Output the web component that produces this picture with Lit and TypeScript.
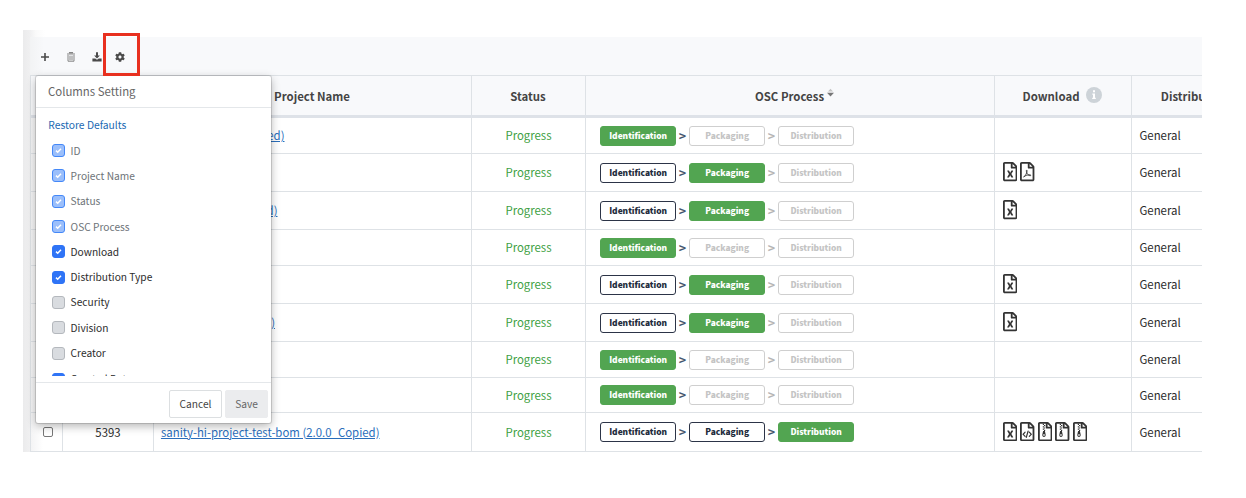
import { LitElement, html, svg, css } from "lit";
import { customElement } from "lit/decorators.js";
import { classMap } from "lit/directives/class-map.js";

type Doc = "excel" | "pdf" | "code" | "zip";

interface Row {
  height: number;
  stage: number;
  docs: Doc[];
  id?: string;
  name?: string;
  nameWidth?: number;
}

const COPIED = "sanity-test (Copied)";

const ROWS: Row[] = [
  { height: 36, stage: 0, docs: [], name: COPIED, nameWidth: 123 },
  { height: 38, stage: 1, docs: ["excel", "pdf"] },
  { height: 38, stage: 1, docs: ["excel"], name: COPIED, nameWidth: 116 },
  { height: 36, stage: 0, docs: [] },
  { height: 38, stage: 1, docs: ["excel"] },
  { height: 38, stage: 1, docs: ["excel"], name: COPIED, nameWidth: 113.5 },
  { height: 36, stage: 0, docs: [] },
  { height: 35, stage: 0, docs: [] },
  {
    height: 39,
    stage: 2,
    docs: ["excel", "code", "zip", "zip", "zip"],
    id: "5393",
    name: "sanity-hi-project-test-bom (2.0.0_Copied)",
    nameWidth: 218,
  },
];

const STAGES = ["Identification", "Packaging", "Distribution"];

const COLUMNS: [string, "locked" | "on" | "off"][] = [
  ["ID", "locked"],
  ["Project Name", "locked"],
  ["Status", "locked"],
  ["OSC Process", "locked"],
  ["Download", "on"],
  ["Distribution Type", "on"],
  ["Security", "off"],
  ["Division", "off"],
  ["Creator", "off"],
  ["Created Date", "on"],
];

const SHEET =
  "M369.9 97.9L286 14C277 5 264.8-.1 252.1-.1H48C21.5 0 0 21.5 0 48v416c0 26.5 21.5 48 48 48h288c26.5 0 48-21.5 48-48V131.9c0-12.7-5.1-25-14.1-34zM332.1 128H256V51.9l76.1 76.1zM48 464V48h160v104c0 13.3 10.7 24 24 24h104v288H48z";

const MARKS = {
  excel: svg`<path d="M260 224h-28.8c-4.4 0-8.4 2.4-10.5 6.3-18 33.1-22.2 42.4-28.6 57.7-13.9-29.1-6.9-17.3-28.6-57.7-2.1-3.9-6.2-6.3-10.6-6.3H124c-9.3 0-15 10-10.4 18l46.3 78-46.3 78c-4.7 8 1.1 18 10.4 18h28.9c4.4 0 8.4-2.4 10.5-6.3 21.7-40 23-45 28.6-57.7 14.9 30.2 5.9 15.9 28.6 57.7 2.1 3.9 6.2 6.3 10.6 6.3H260c9.3 0 15-10 10.4-18L224 320c.7-1.1 30.3-50.5 46.3-78 4.7-8-1.1-18-10.3-18z"/>`,
  pdf: svg`<path d="M96 402c34-14 62-62 82-116 10-28 14-62 4-70-12-6-16 22-6 56 14 44 46 84 84 92 20 4 36-4 28-14-18-14-70-8-116 8-36 12-72 26-76 44z" fill="none" stroke="currentColor" stroke-width="24"/>`,
  code: svg`<path d="M136 272l-52 56 52 56M248 272l52 56-52 56M216 244l-48 168" fill="none" stroke="currentColor" stroke-width="32" stroke-linecap="round"/>`,
  zip: svg`<path d="M128 48h32v32h-32zM160 80h32v32h-32zM128 112h32v32h-32zM160 144h32v32h-32zM128 176h32v32h-32zM160 208h32v32h-32z"/><path fill-rule="evenodd" d="M136 240h48l20 92c8 36-14 68-44 68s-52-32-44-68zM160 330c-18 0-28 10-28 20s10 20 28 20 28-10 28-20-10-20-28-20z"/>`,
};

@customElement("app-root")
export class AppRoot extends LitElement {
  static styles = css`
    :host {
      display: block;
      position: relative;
      width: 1246px;
      height: 498px;
      overflow: hidden;
      background: #fff;
      color: #2b2b2b;
      font: 11.4px/16px "Noto Sans CJK JP", "Source Sans Pro", sans-serif;
    }
    .frame {
      box-sizing: border-box;
      width: 1202px;
      padding: 30px 0 0 23px;
      overflow: hidden;
    }
    .page {
      padding-left: 7px;
      padding-top: 7px;
      background: linear-gradient(90deg, #ebebec, #f0f0f1 7px, #fafafa 13px, #fff 22px);
    }
    .toolbar {
      display: flex;
      align-items: center;
      gap: 16px;
      height: 38px;
      padding: 1px 0 0 10px;
      box-sizing: border-box;
      background: linear-gradient(90deg, #f2f3f4, #f8f9fb 14px);
      color: #4a4a4a;
    }
    .toolbar svg { width: 10px; height: 10px; display: block; fill: currentColor; }
    .toolbar .trash { color: #858585; }
    .toolbar .gear { margin-left: -3px; }
    .row {
      display: grid;
      grid-template-columns: 32px 91px 318px 114px 409px 137px 140px;
      border-left: 1px solid #dee2e6;
      width: 1241px;
      background: linear-gradient(90deg, #f4f4f5, #fff 12px);
    }
    .row.head {
      height: 43px;
      box-sizing: border-box;
      border-top: 1px solid #dee2e6;
      border-bottom: 3px solid #dee2e8;
      background: #f8f9fb;
      font-weight: 700;
      color: #444;
    }
    .cell {
      box-sizing: border-box;
      display: flex;
      align-items: center;
      justify-content: center;
      border-right: 1px solid #dee2e6;
      min-width: 0;
      white-space: nowrap;
    }
    .head .cell { padding-right: 1px; }
    .body .cell { border-bottom: 1px solid #dee2e6; padding-bottom: 1px; }
    .body .flow { padding-bottom: 0; }
    .head .osc { padding-left: 10px; }
    .head .dist { padding-left: 17px; }
    .start { justify-content: flex-start; padding-left: 7.5px; }
    .tick {
      width: 8px;
      height: 8px;
      border: 1px solid #777;
      border-radius: 2px;
      margin-left: 2px;
    }
    .name {
      display: flex;
      justify-content: flex-end;
      color: #2a6ebb;
      text-decoration: underline;
      text-underline-offset: 1px;
    }
    .status { color: #3e9f43; }
    .flow { padding-left: 14px; justify-content: flex-start; }
    .pill {
      box-sizing: border-box;
      width: 76.3px;
      height: 20px;
      border: 1px solid #cfcfcf;
      border-radius: 3px;
      color: #c4c4c4;
      text-align: center;
      font-size: 8.4px;
      line-height: 17px;
      font-weight: 900;
    }
    .pill.done { border-color: #2c3447; color: #222b3c; }
    .pill.now { border-color: #52a551; background: #52a551; color: #fff; }
    .arrow {
      width: 12.7px;
      text-align: center;
      font-size: 12.5px;
      line-height: 16px;
      font-weight: 700;
      color: #b5b5b5;
      text-indent: -0.5px;
    }
    .arrow.done { color: #45566e; }
    .docs { padding-left: 8px; gap: 3px; justify-content: flex-start; }
    .docs svg { width: 14.4px; height: 19.2px; fill: currentColor; color: #333; display: block; }
    .sort { width: 7px; height: 10px; margin: -5px 0 0 3px; }
    .info { width: 16px; height: 16px; margin: -2px 0 0 7px; }
    .highlight {
      position: absolute;
      left: 103px;
      top: 33px;
      width: 31px;
      height: 37px;
      border: 3px solid #e8301f;
    }
    .popover {
      position: absolute;
      left: 36px;
      top: 76px;
      width: 235px;
      height: 347px;
      background: #fff;
      border-radius: 2px;
      box-shadow: 0 0 0 1px rgba(0, 0, 0, 0.13), 0 3px 10px rgba(0, 0, 0, 0.3);
      display: flex;
      flex-direction: column;
    }
    .title {
      height: 31px;
      line-height: 30px;
      padding-left: 12px;
      border-bottom: 1px solid #e4e7ea;
      color: #666;
    }
    .list { height: 268px; overflow: hidden; }
    .restore { padding: 9px 0 5px 12.3px; font-size: 10.3px; line-height: 16px; color: #2169b3; }
    .option {
      display: flex;
      align-items: center;
      gap: 6px;
      height: 25.3px;
      padding-left: 15.6px;
      font-size: 10.2px;
      color: #2d2d2d;
    }
    .option.locked { color: #6d7378; }
    .option:last-child { padding-top: 1px; }
    .check { width: 13px; height: 13px; display: block; }
    .footer {
      margin-top: 6px;
      border-top: 1px solid #e4e7ea;
      padding: 7px 3px 0 0;
      display: flex;
      justify-content: flex-end;
      gap: 3px;
      font-size: 10.2px;
    }
    .button {
      box-sizing: border-box;
      height: 28px;
      width: 53px;
      border: 1px solid #dcdfe1;
      border-radius: 2px;
      line-height: 25px;
      text-align: center;
      color: #444;
    }
    .button.save { width: 43px; background: #ebecee; border-color: #ebecee; color: #666; }
  `;

  private toolbar() {
    return html`<div class="toolbar">
      <svg viewBox="0 0 10 10"><path d="M4.2 1h1.6v3.2H9v1.6H5.8V9H4.2V5.8H1V4.2h3.2z" /></svg>
      <svg class="trash" viewBox="0 0 10 10">
        <path d="M3.5 1.2V.6h3v.6M1 2h8" fill="none" stroke="currentColor" stroke-width="1.1" />
        <path d="M2 3v6.2h6V3M4 3.6v4.6M6 3.6v4.6" fill="none" stroke="currentColor" stroke-width="1" />
      </svg>
      <svg viewBox="0 0 10 10">
        <path d="M4 .3h2v3.2h1.9L5 6.5 2.1 3.5H4zM.4 6.4h2.9L5 7.8l1.7-1.4h2.9v3.1H.4z" />
      </svg>
      <svg class="gear" viewBox="0 0 512 512">
        <path fill-rule="evenodd" d="M487.4 315.7l-42.6-24.6c4.3-23.2 4.3-47 0-70.2l42.6-24.6c4.9-2.8 7.1-8.6 5.5-14-11.1-35.6-30-67.8-54.7-94.6-3.8-4.1-10-5.1-14.8-2.3L380.8 110c-17.9-15.4-38.5-27.3-60.8-35.1V25.8c0-5.6-3.9-10.5-9.4-11.7-36.7-8.2-74.3-7.8-109.2 0-5.5 1.2-9.4 6.1-9.4 11.7V75c-22.2 7.9-42.8 19.8-60.8 35.1L88.7 85.5c-4.9-2.8-11-1.9-14.8 2.3-24.7 26.7-43.6 58.9-54.7 94.6-1.7 5.4.6 11.2 5.5 14L67.3 221c-4.3 23.2-4.3 47 0 70.2l-42.6 24.6c-4.9 2.8-7.1 8.6-5.5 14 11.1 35.6 30 67.8 54.7 94.6 3.8 4.1 10 5.1 14.8 2.3l42.6-24.6c17.9 15.4 38.5 27.3 60.8 35.1v49.2c0 5.6 3.9 10.5 9.4 11.7 36.7 8.2 74.3 7.8 109.2 0 5.5-1.2 9.4-6.1 9.4-11.7v-49.2c22.2-7.9 42.8-19.8 60.8-35.1l42.6 24.6c4.9 2.8 11 1.9 14.8-2.3 24.7-26.7 43.6-58.9 54.7-94.6 1.5-5.5-.7-11.3-5.6-14.1zM256 336c-44.1 0-80-35.9-80-80s35.9-80 80-80 80 35.9 80 80-35.9 80-80 80z" />
      </svg>
    </div>`;
  }

  private head() {
    return html`<div class="row head">
      <div class="cell"></div>
      <div class="cell"></div>
      <div class="cell">Project Name</div>
      <div class="cell">Status</div>
      <div class="cell osc">
        OSC Process<svg class="sort" viewBox="0 0 7 10">
          <path d="M3.5 .8L6 3.6H1z" fill="#c4c4c4" />
          <path d="M0 4.8h7L3.5 8.4z" fill="#777" />
        </svg>
      </div>
      <div class="cell">
        Download<svg class="info" viewBox="0 0 16 16">
          <circle cx="8" cy="8" r="8" fill="#cdd3d8" />
          <path d="M7 3.2h2v2H7zM6.3 6.5H9v4.3h.8V12H6.2v-1.2H7V7.700h-.7z" fill="#fff" />
        </svg>
      </div>
      <div class="cell dist">Distribution Type</div>
    </div>`;
  }

  private row(r: Row) {
    return html`<div class="row body" style="height:${r.height}px">
      <div class="cell"><span class="tick"></span></div>
      <div class="cell">${r.id ?? ""}</div>
      <div class="cell start">
        ${r.name ? html`<span class="name" style="width:${r.nameWidth}px">${r.name}</span>` : ""}
      </div>
      <div class="cell status">Progress</div>
      <div class="cell flow">
        ${STAGES.map(
          (s, i) => html`${i
              ? html`<span class=${classMap({ arrow: true, done: i <= Math.max(1, r.stage) })}>&gt;</span>`
              : ""}<span class=${classMap({ pill: true, done: i < r.stage, now: i === r.stage })}>${s}</span>`
        )}
      </div>
      <div class="cell docs">
        ${r.docs.map((d) => html`<svg viewBox="0 0 384 512"><path d=${SHEET} />${MARKS[d]}</svg>`)}
      </div>
      <div class="cell start">General</div>
    </div>`;
  }

  private check(state: string) {
    const fill = state === "off" ? "#d9dce0" : state === "on" ? "#2f74f6" : "#9bbffb";
    const edge = state === "off" ? "#b4b8bd" : state === "on" ? "#2f74f6" : "#4488f8";
    return html`<svg class="check" viewBox="0 0 13 13">
      <rect x=".5" y=".5" width="12" height="12" rx="2.5" fill=${fill} stroke=${edge} />
      ${state === "off"
        ? ""
        : svg`<path d="M4 6.6l1.7 1.6L9 4.8" fill="none" stroke="#fff" stroke-width="1.5" />`}
    </svg>`;
  }

  render() {
    return html`
      <div class="frame">
        <div class="page">${this.toolbar()}${this.head()}${ROWS.map((r) => this.row(r))}</div>
      </div>
      <div class="popover">
        <div class="title">Columns Setting</div>
        <div class="list">
          <div class="restore">Restore Defaults</div>
          ${COLUMNS.map(([label, state]) => html`<div class="option ${state}">${this.check(state)}<span>${label}</span></div>`)}
        </div>
        <div class="footer">
          <span class="button">Cancel</span>
          <span class="button save">Save</span>
        </div>
      </div>
      <div class="highlight"></div>
    `;
  }
}
